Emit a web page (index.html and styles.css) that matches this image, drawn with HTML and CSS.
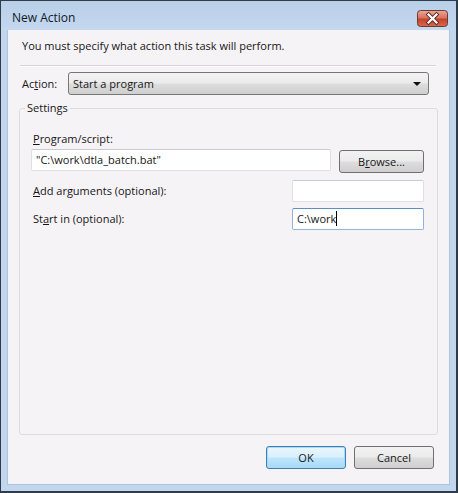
FILE: index.html
```html
<!DOCTYPE html>
<html lang="en">
<head>
    <meta charset="UTF-8">
    <title>New Action</title>
    <link rel="stylesheet" href="styles.css">
</head>
<body>
    <div class="window">
        <div class="titlebar">
            <span class="title">New Action</span>
            <div class="close">
                <svg width="31" height="17" viewBox="0 0 31 17">
                    <defs>
                        <linearGradient id="red" x1="0" y1="0" x2="0" y2="1">
                            <stop offset="0" stop-color="#eaa89b"/>
                            <stop offset="0.45" stop-color="#d9735f"/>
                            <stop offset="0.55" stop-color="#c7432b"/>
                            <stop offset="1" stop-color="#d66a4f"/>
                        </linearGradient>
                    </defs>
                    <rect x="0.5" y="0.5" width="30" height="16" rx="3" fill="url(#red)" stroke="#6b3a36"/>
                    <path d="M11.5 4.5 L19.5 12.5 M19.5 4.5 L11.5 12.5" stroke="#5a2a22" stroke-width="4" stroke-linecap="square"/>
                    <path d="M11.5 4.5 L19.5 12.5 M19.5 4.5 L11.5 12.5" stroke="#ffffff" stroke-width="2.2" stroke-linecap="square"/>
                </svg>
            </div>
        </div>
        <div class="client">
            <p class="intro">You must specify what action this task will perform.</p>
            <div class="separator"></div>
            <div class="action-row">
                <label class="action-label">Ac<u>t</u>ion:</label>
                <div class="combo">
                    <span>Start a program</span>
                    <span class="arrow"></span>
                </div>
            </div>
            <fieldset class="group">
                <legend>Settings</legend>
                <label class="field-label"><u>P</u>rogram/script:</label>
                <div class="program-row">
                    <div class="textbox wide">"C:\work\dtla_batch.bat"</div>
                    <div class="btn browse">B<u>r</u>owse...</div>
                </div>
                <div class="opt-row">
                    <label class="field-label"><u>A</u>dd arguments (optional):</label>
                    <div class="textbox short"></div>
                </div>
                <div class="opt-row">
                    <label class="field-label">St<u>a</u>rt in (optional):</label>
                    <div class="textbox short focused">C:\work<span class="caret"></span></div>
                </div>
            </fieldset>
            <div class="buttons">
                <div class="btn default">OK</div>
                <div class="btn">Cancel</div>
            </div>
        </div>
    </div>
</body>
</html>
```

FILE: styles.css
```css
body {
    margin: 0;
    font-family: 'Open Sans', sans-serif;
    font-size: 11px;
    color: #161616;
}
.window {
    width: 458px;
    height: 493px;
    box-sizing: border-box;
    border: 1px solid #2f3b47;
    border-bottom-width: 2px;
    border-right-width: 2px;
    background: #c2d6ee;
    display: flex;
    flex-direction: column;
    padding: 0 6px 6px 6px;
}
.titlebar {
    height: 29px;
    display: flex;
    align-items: flex-start;
    justify-content: space-between;
    background: linear-gradient(#b9cfe8, #c4d8f0);
    margin: 0 -6px;
    padding: 0 8px 0 11px;
}
.title {
    font-size: 12px;
    line-height: 16px;
    margin-top: 9px;
    color: #111b26;
}
.close {
    margin-top: 9px;
    height: 17px;
}
.client {
    flex: 1;
    background: #f6f3f7;
    display: flex;
    flex-direction: column;
    border: 1px solid #aec4dc;
    border-top: 0;
}
.intro {
    margin: 8px 0 0 14px;
    line-height: 16px;
}
.separator {
    margin: 11px 13px 0 12px;
    border-top: 1px solid #d6d6d8;
    border-bottom: 1px solid #ffffff;
}
.action-row {
    display: flex;
    align-items: center;
    margin: 5px 20px 0 14px;
}
.action-label {
    width: 46px;
}
.combo {
    flex: 1;
    height: 23px;
    box-sizing: border-box;
    border: 1px solid #777;
    border-radius: 3px;
    background: linear-gradient(#f3f3f3 0%, #ebebeb 48%, #dddddd 52%, #cfcfcf 100%);
    display: flex;
    align-items: center;
    justify-content: space-between;
    padding: 0 7px 0 4px;
}
.arrow {
    width: 0;
    height: 0;
    border-left: 4px solid transparent;
    border-right: 4px solid transparent;
    border-top: 4px solid #111;
}
.group {
    flex: 1;
    margin: 5px 11px 0 11px;
    padding: 0 12px 0 11px;
    border: 1px solid #d9dde2;
    border-radius: 3px;
    min-width: 0;
}
.group legend {
    padding: 0 2px;
    margin-left: -6px;
    line-height: 16px;
}
.field-label {
    display: block;
    line-height: 16px;
    padding-left: 2px;
}
.group > .field-label {
    margin-top: 15px;
}
.program-row {
    display: flex;
    align-items: flex-start;
    gap: 8px;
    margin-top: 2px;
}
.textbox {
    height: 22px;
    box-sizing: border-box;
    background: #fff;
    border: 1px solid #dcdfe4;
    border-top-color: #c8ccd2;
    border-radius: 2px;
    padding: 0 4px;
    line-height: 20px;
    white-space: nowrap;
}
.textbox.wide {
    width: 300px;
}
.textbox.short {
    width: 132px;
}
.textbox.focused {
    border-color: #8fb6d8;
    border-top-color: #5e8fbf;
}
.caret {
    display: inline-block;
    width: 1px;
    height: 15px;
    background: #000;
    vertical-align: -3px;
}
.opt-row {
    display: flex;
    align-items: center;
    justify-content: space-between;
    margin-top: 7px;
    padding-right: 1px;
}
.opt-row + .opt-row {
    margin-top: 6px;
}
.btn {
    height: 23px;
    box-sizing: border-box;
    border: 1px solid #707070;
    border-radius: 3px;
    background: linear-gradient(#f2f2f2 0%, #ebebeb 48%, #dddddd 52%, #cfcfcf 100%);
    text-align: center;
    line-height: 21px;
}
.browse {
    width: 85px;
    margin-top: 1px;
}
.buttons {
    display: flex;
    justify-content: flex-end;
    gap: 8px;
    margin: 11px 15px 15px 0;
}
.buttons .btn {
    width: 80px;
}
.btn.default {
    border-color: #3c7fb1;
    box-shadow: inset 0 0 0 1px #a8dbf4;
    background: linear-gradient(#eaf6fd 0%, #d9f0fc 48%, #bee6fd 52%, #a7d9f5 100%);
}
```
